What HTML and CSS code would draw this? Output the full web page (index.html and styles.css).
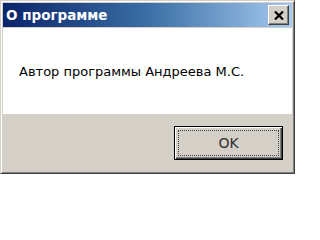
FILE: index.html
```html
<!DOCTYPE html>
<html>
<head>
<meta charset="utf-8">
<link rel="stylesheet" href="styles.css">
</head>
<body>
<div class="window">
  <div class="titlebar">
    <span class="title">О программе</span>
    <button class="close" aria-label="Закрыть">
      <svg width="10" height="9" viewBox="0 0 10 9"><path d="M1 0.5 L9 8.5 M9 0.5 L1 8.5" stroke="#000" stroke-width="2.2" fill="none"/></svg>
    </button>
  </div>
  <div class="content">
    <p class="message">Автор программы Андреева М.С.</p>
  </div>
  <div class="footer">
    <button class="ok"><span class="focus">OK</span></button>
  </div>
</div>
</body>
</html>
```
FILE: styles.css
```css
html, body {
  margin: 0;
  padding: 0;
  background: #ffffff;
}
body {
  font-family: "DejaVu Sans", "Liberation Sans", sans-serif;
}
.window {
  width: 295px;
  height: 174px;
  box-sizing: border-box;
  background: #d4d0c8;
  border-top: 1px solid #d4d0c8;
  border-left: 1px solid #d4d0c8;
  border-right: 1px solid #404040;
  border-bottom: 1px solid #404040;
  box-shadow: inset 1px 1px 0 #ffffff, inset -1px -1px 0 #808080;
  padding: 2px 2px 2px 2px;
  display: flex;
  flex-direction: column;
}
.titlebar {
  height: 24px;
  background: linear-gradient(to right, #0a246a 0%, #3a6ea5 50%, #a6caf0 100%);
  display: flex;
  align-items: center;
  justify-content: space-between;
  padding: 0 3px 0 3px;
}
.title {
  color: #ffffff;
  font-weight: bold;
  font-size: 13.5px;
}
.close {
  width: 21px;
  height: 20px;
  padding: 0;
  margin: 0;
  background: #d4d0c8;
  border: 1px solid;
  border-color: #ffffff #404040 #404040 #ffffff;
  box-shadow: inset -1px -1px 0 #808080;
  display: flex;
  align-items: center;
  justify-content: center;
}
.content {
  background: #ffffff;
  height: 86px;
  margin-top: 1px;
  display: flex;
  align-items: center;
  padding-left: 16px;
}
.message {
  margin: 0;
  font-size: 13px;
  color: #000000;
}
.footer {
  flex: 1;
  display: flex;
  justify-content: flex-end;
  align-items: flex-start;
  padding: 12px 9px 0 0;
}
.ok {
  width: 109px;
  height: 34px;
  padding: 3px;
  margin: 0;
  background: #d4d0c8;
  border: 1px solid #000000;
  box-shadow: inset 1px 1px 0 #ffffff, inset -1px -1px 0 #404040, inset -2px -2px 0 #808080;
  display: flex;
}
.focus {
  flex: 1;
  border: 1px dotted #404040;
  display: flex;
  align-items: center;
  justify-content: center;
  font-family: "DejaVu Sans", "Liberation Sans", sans-serif;
  font-size: 14px;
  color: #303030;
}
```
